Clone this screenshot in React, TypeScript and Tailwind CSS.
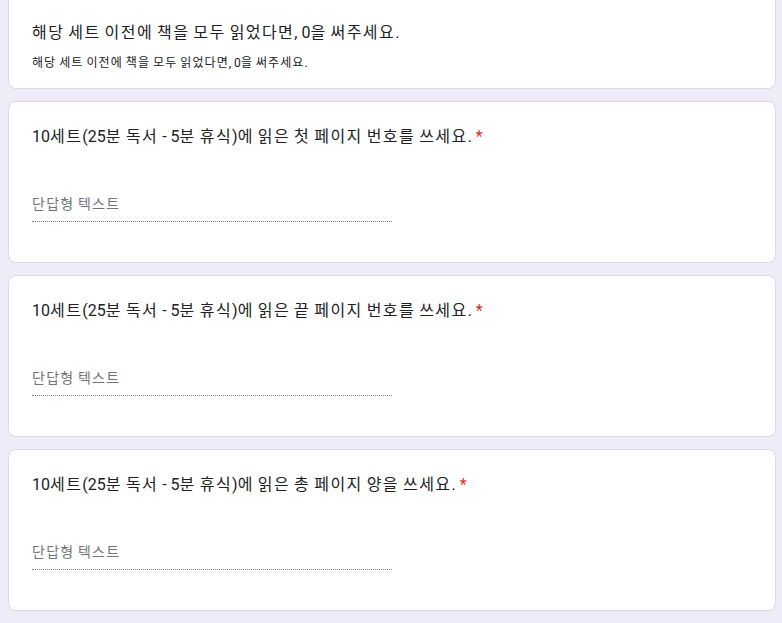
const questions = [
  '10세트(25분 독서 - 5분 휴식)에 읽은 첫 페이지 번호를 쓰세요.',
  '10세트(25분 독서 - 5분 휴식)에 읽은 끝 페이지 번호를 쓰세요.',
  '10세트(25분 독서 - 5분 휴식)에 읽은 총 페이지 양을 쓰세요.',
];

// hangul in the available CJK font runs a bit narrow, so widen those runs only
function Ko({ text }: { text: string }) {
  return (
    <>
      {text.split(/([\uAC00-\uD7A3]+)/).map((part, i) =>
        /[\uAC00-\uD7A3]/.test(part) ? (
          <span key={i} className="tracking-[0.09em]">{part}</span>
        ) : (
          <span key={i}>{part}</span>
        )
      )}
    </>
  );
}

function QuestionCard({ title }: { title: string }) {
  return (
    <div className="ml-2 w-[768px] rounded-lg border border-[#dadce0] bg-white px-[23px] pt-[23px] pb-[40px]">
      <div className="text-base leading-6 text-[#202124]">
        <Ko text={title} />
        <span className="text-[#d93025]"> *</span>
      </div>
      <div className="mt-[45px] w-[360px] border-b border-dotted border-[#80868b] pb-[7px] text-sm leading-5 text-[#70757a]">
        <Ko text="단답형 텍스트" />
      </div>
    </div>
  );
}

export default function App() {
  return (
    <div
      className="min-h-[623px] bg-[#f0ebf8]"
      style={{ fontFamily: 'Roboto, "Noto Sans CJK KR", sans-serif' }}
    >
      <div className="flex flex-col gap-3">
        <div className="ml-2 w-[768px] rounded-b-lg border border-t-0 border-[#dadce0] bg-white px-[23px] pt-[21px] pb-[16px]">
          <div className="text-base leading-6 text-[#202124]">
            <Ko text="해당 세트 이전에 책을 모두 읽었다면, 0을 써주세요." />
          </div>
          <div className="mt-[9px] text-xs leading-[18px] text-[#202124]">
            <Ko text="해당 세트 이전에 책을 모두 읽었다면, 0을 써주세요." />
          </div>
        </div>
        {questions.map(q => (
          <QuestionCard key={q} title={q} />
        ))}
        <div className="ml-2 h-10 w-[768px] rounded-t-lg border border-b-0 border-[#dadce0] bg-white" />
      </div>
    </div>
  );
}
